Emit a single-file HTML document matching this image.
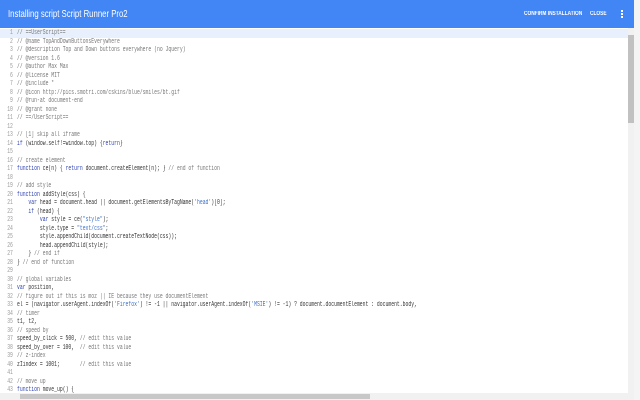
<!DOCTYPE html>
<html><head><style>
body{margin:0;width:640px;height:400px;overflow:hidden;background:#f4f4f4;position:relative;font-family:"Liberation Sans",sans-serif}
#hdr{position:absolute;left:0;top:0;width:634px;height:28px;background:#4285f4;color:#fff}
#title{position:absolute;left:8px;top:8px;font-size:10.5px;transform:scaleX(0.74);transform-origin:left;white-space:nowrap}
.btn{position:absolute;top:11px;font-size:6px;font-weight:bold;transform:scaleX(0.8);transform-origin:left;white-space:nowrap}
#ed{position:absolute;left:0;top:28px;width:628px;height:365px;background:#fff;overflow:hidden}
.l{position:absolute;left:0;height:8.5px;line-height:8.5px;white-space:pre;font-family:"Liberation Mono",monospace;font-size:7px;color:#333;transform:scaleX(0.68);transform-origin:left}
.n{display:inline-block;width:19px;text-align:right;color:#999;padding-right:6px}
.c{color:#777}.k{color:#2a3fb0}.s{color:#3b6fc9}
#vs{position:absolute;left:628px;top:28px;width:6px;height:365px;background:#f1f1f1}
#vt{position:absolute;left:628px;top:35px;width:6px;height:88px;background:#c1c1c1}
#hs{position:absolute;left:0;top:393px;width:634px;height:7px;background:#f1f1f1}
#ht{position:absolute;left:20px;top:394px;width:350px;height:5px;background:#c8c8c8}
</style></head><body>
<div id="hdr"><div id="title">Installing script Script Runner Pro2</div>
<div class="btn" style="left:524px">CONFIRM INSTALLATION</div>
<div class="btn" style="left:590px">CLOSE</div>
<div style="position:absolute;left:621px;top:10px;width:2px;height:2px;background:#fff;box-shadow:0 3px #fff,0 6px #fff"></div></div>
<div id="ed">
<div style="position:absolute;left:0;top:1px;width:628px;height:8.5px;background:#e8f0fe"></div>
<div id="code"></div>
</div>
<div id="vs"></div><div id="vt"></div><div id="hs"></div><div id="ht"></div>
<script>
var L=[
'<span class=c>// ==UserScript==</span>',
'<span class=c>// @name TopAndDownButtonsEverywhere</span>',
'<span class=c>// @description Top and Down buttons everywhere (no Jquery)</span>',
'<span class=c>// @version 1.6</span>',
'<span class=c>// @author Max Max</span>',
'<span class=c>// @license MIT</span>',
'<span class=c>// @include *</span>',
'<span class=c>// @icon http://pics.smotri.com/cskins/blue/smiles/bt.gif</span>',
'<span class=c>// @run-at document-end</span>',
'<span class=c>// @grant none</span>',
'<span class=c>// ==/UserScript==</span>',
'',
'<span class=c>// [1] skip all iframe</span>',
'<span class=k>if</span> (window.self!=window.top) {<span class=k>return</span>}',
'',
'<span class=c>// create element</span>',
'<span class=k>function</span> ce(n) { <span class=k>return</span> document.createElement(n); } <span class=c>// end of function</span>',
'',
'<span class=c>// add style</span>',
'<span class=k>function</span> addStyle(css) {',
'    <span class=k>var</span> head = document.head || document.getElementsByTagName(<span class=s>\'head\'</span>)[0];',
'    <span class=k>if</span> (head) {',
'        <span class=k>var</span> style = ce(<span class=s>"style"</span>);',
'        style.type = <span class=s>"text/css"</span>;',
'        style.appendChild(document.createTextNode(css));',
'        head.appendChild(style);',
'    } <span class=c>// end if</span>',
'} <span class=c>// end of function</span>',
'',
'<span class=c>// global variables</span>',
'<span class=k>var</span> position,',
'<span class=c>// figure out if this is moz || IE because they use documentElement</span>',
'el = (navigator.userAgent.indexOf(<span class=s>\'Firefox\'</span>) != -1 || navigator.userAgent.indexOf(<span class=s>\'MSIE\'</span>) != -1) ? document.documentElement : document.body,',
'<span class=c>// timer</span>',
't1, t2,',
'<span class=c>// speed by</span>',
'speed_by_click = 500, <span class=c>// edit this value</span>',
'speed_by_over = 100,  <span class=c>// edit this value</span>',
'<span class=c>// z-index</span>',
'zIindex = 1001;       <span class=c>// edit this value</span>',
'',
'<span class=c>// move up</span>',
'<span class=k>function</span> move_up() {'];
var h='';for(var i=0;i<L.length;i++){h+='<div class="l" style="top:'+(1+i*8.5)+'px"><span class="n">'+(i+1)+'</span>'+L[i]+'</div>';}
document.getElementById('code').innerHTML=h;
</script>
</body></html>
